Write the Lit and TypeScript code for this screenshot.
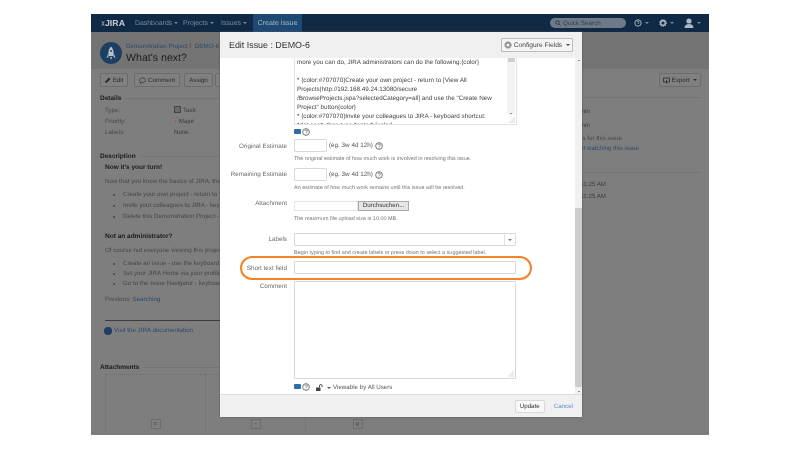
import { LitElement, html, css } from "lit";
import { customElement } from "lit/decorators.js";

const help = html`<svg class="help" viewBox="0 0 10 10" width="8" height="8"><circle cx="5" cy="5" r="4.2" fill="none" stroke="#555" stroke-width="1"/><path d="M3.6 3.9a1.5 1.5 0 1 1 2.2 1.3c-.5.3-.8.5-.8 1.1" fill="none" stroke="#555" stroke-width=".9"/><circle cx="5" cy="7.5" r=".6" fill="#555"/></svg>`;
const wiki = html`<span class="wiki"></span>`;
const caret = html`<i class="caret"></i>`;
const grip = html`<svg class="grip" width="6" height="6" viewBox="0 0 6 6"><path d="M5 1v.01M3 3v.01M5 3v.01M1 5v.01M3 5v.01M5 5v.01" stroke="#999" stroke-linecap="round"/></svg>`;

@customElement("app-root")
export class AppRoot extends LitElement {
  static styles = css`
    :host { display: block; width: 800px; height: 450px; background: #fff; font-family: "Liberation Sans", Arial, sans-serif; overflow: hidden; text-rendering: geometricPrecision; }
    .stage { box-sizing: border-box; width: 800px; height: 450px; padding: 14px 91px 15px; filter: blur(0.4px); }
    .frame { position: relative; width: 618px; height: 421px; background: #7e7e7e; overflow: hidden; color: #333; font-size: 6.2px; }
    .top { height: 18px; background: #102a45; display: flex; align-items: center; padding: 0 8px 0 10px; color: #7d8b9b; gap: 10px; font-size: 6.9px; }
    .logo { color: #c3cad2; font-weight: 700; font-size: 8.8px; width: 24px; display: flex; align-items: center; gap: 0; flex: none; }
    .nav { white-space: nowrap; flex: none; }
    .nav.a { width: 38px; } .nav.b { width: 28px; } .nav.c { width: 22px; }
    .create { background: #1c4a75; color: #a8b6c4; height: 18px; width: 49px; display: flex; align-items: center; justify-content: center; font-size: 7.1px; flex: none; }
    .spacer { flex: 1; }
    .search { width: 76px; height: 10px; border-radius: 6px; background: #6d7b89; color: #2b3b4c; font-size: 6.3px; display: flex; align-items: center; gap: 2px; padding-left: 5px; box-sizing: border-box; margin-right: -2px; }
    .ticon { display: flex; align-items: center; gap: 1px; }
    .caret { display: inline-block; width: 0; height: 0; border: 2px solid transparent; border-top-color: currentColor; border-bottom: 0; margin-left: 2px; vertical-align: middle; }
    .phead { height: 37px; background: #747474; display: flex; gap: 4px; padding: 10px 9px 0; box-sizing: border-box; }
    .pav { width: 22px; height: 22px; border-radius: 50%; background: #1d3f63; display: flex; align-items: center; justify-content: center; flex: none; }
    .phead .txt { overflow: hidden; width: 94px; }
    .crumb { color: #2e4a66; line-height: 9px; white-space: nowrap; font-size: 6.25px; }
    .crumb span { color: #444; }
    .title { font-size: 10.6px; color: #1c1c1c; line-height: 15px; white-space: nowrap; }
    .tools { display: flex; gap: 4px; padding: 4px 9px 0; height: 22px; box-sizing: border-box; }
    .tb { height: 14px; border: 1px solid #6c6c6c; background: #808080; border-radius: 2px; box-sizing: border-box; display: flex; align-items: center; justify-content: center; color: #2c2c2c; gap: 2px; flex: none; }
    .tb.e { width: 28px; margin-right: 2px; } .tb.c { width: 46px; } .tb.s { width: 29px; margin-right: -2px; } .tb.m { width: 30px; } .tb.x { width: 42px; }
    .main { display: flex; }
    .left { width: 129px; padding-left: 9px; box-sizing: border-box; white-space: nowrap; overflow: hidden; }
    .sect { font-weight: 700; font-size: 6.5px; color: #1b1b1b; height: 9px; line-height: 9px; display: flex; align-items: center; gap: 4px; }
    .sect::after { content: ""; flex: 1; height: 1px; background: #747474; min-width: 60px; }
    .sect.d { margin-top: 3px; } .sect.n { margin-top: 15px; } .sect.a { margin-top: 28px; }
    .kv { display: grid; grid-template-columns: 69px 1fr; padding: 3px 0 0 5px; row-gap: 2px; line-height: 9px; color: #3c3c3c; }
    .kv .k { color: #484848; }
    .task { display: inline-block; width: 5px; height: 5px; border: 1px solid #444; background: #6a6a6a; margin-right: 2px; vertical-align: -1px; }
    .desc { padding: 0 0 0 5px; line-height: 9px; color: #474747; }
    .desc b { display: block; color: #1b1b1b; font-size: 6.5px; }
    .desc .b1 { padding-top: 2px; } .desc .b2 { padding-top: 9px; }
    .desc p { margin: 0; padding-top: 5px; }
    .desc ul { margin: 0; padding: 4px 0 0 18px; }
    .desc li { height: 11px; line-height: 9px; }
    .desc ul.tight li { height: 10px; }
    .desc p.prev { padding-top: 6px; }
    a, .link { color: #2b4a6c; text-decoration: none; }
    .rule { height: 1px; background: #3c3c3c; margin: 16px 0 0 5px; }
    .doc { display: flex; align-items: center; gap: 2px; margin: 5px 0 0 4px; color: #2b4a6c; line-height: 9px; }
    .dot { width: 8px; height: 8px; border-radius: 50%; background: #1d3f63; }
    .atts { display: flex; position: absolute; left: 14px; top: 360px; }
    .cell { width: 100px; height: 62px; border: 1px dotted #6f6f6f; border-right: 0; box-sizing: border-box; display: flex; align-items: flex-end; justify-content: center; padding-bottom: 6px; }
    .cell.l { width: 104px; }
    .cell span { width: 10px; height: 10px; border: 1px solid #6c6c6c; text-align: center; font-size: 5px; line-height: 9px; color: #333; box-sizing: border-box; }
    .right { margin-left: auto; width: 127px; box-sizing: border-box; color: #3c3c3c; line-height: 9px; white-space: nowrap; }
    .bar { display: flex; justify-content: flex-end; margin: -18px 8px 0 0; }
    .hr { height: 1px; background: #747474; margin: 10px 8px 0 0; }
    .rw { display: flex; justify-content: flex-end; overflow: hidden; }
    .r1 { padding-right: 119px; margin-top: 9px; }
    .r2 { padding-right: 119px; margin-top: 5px; }
    .r3 { padding-right: 87px; margin-top: 4px; color: #474747; }
    .r4 { padding-right: 70px; margin-top: 1px; }
    .hr2 { margin-top: 19px; }
    .r5 { padding-right: 103px; margin-top: 7px; }
    .r6 { padding-right: 103px; margin-top: 3px; }

    .dialog { position: absolute; left: 129px; top: 18px; width: 362px; height: 385px; background: #fff; display: flex; flex-direction: column; box-shadow: 0 0 2px #555; color: #555; }
    .dh { height: 26px; background: #f0f0f0; flex: none; display: flex; align-items: center; justify-content: space-between; padding: 0 9px; box-sizing: border-box; }
    .dh h2 { margin: 0; font-weight: 400; font-size: 8.9px; color: #333; }
    .cfg { height: 14px; width: 72px; border: 1px solid #bbb; background: #f5f5f5; box-sizing: border-box; display: flex; align-items: center; justify-content: center; gap: 2px; color: #444; font-size: 6.65px; border-radius: 1px; }
    .db { flex: 1; display: flex; min-height: 0; }
    .form { flex: 1; overflow: hidden; }
    .sb { width: 7px; background: #f0f0f0; box-sizing: border-box; display: flex; flex-direction: column; justify-content: space-between; align-items: center; position: relative; }
    .thumb { position: absolute; left: 0; right: 0; top: 150px; height: 179px; background: #cdcdcd; }
    .arr { width: 0; height: 0; border: 1.5px solid transparent; position: relative; }
    .arr.u { border-bottom-color: #333; margin-top: 2px; border-top: 0; }
    .arr.d { border-top-color: #333; margin-bottom: 2px; border-bottom: 0; }
    .row { display: grid; grid-template-columns: 67px 222px; column-gap: 7px; }
    .lab { text-align: right; font-size: 6.3px; line-height: 9px; color: #6a6a6a; }
    .ta { height: 67px; margin-left: 74px; width: 223px; box-sizing: border-box; border: 1px solid #e2e2e2; border-top: 0; padding: 0 2px; position: relative; overflow: hidden; color: #444; line-height: 9px; font-size: 6.3px; }
    .ta p { margin: 0; white-space: nowrap; }
    .ta .gap { height: 9px; }
    .tasb { position: absolute; right: 1px; top: 0; bottom: 9px; width: 8px; background: #f3f3f3; display: flex; flex-direction: column; justify-content: space-between; align-items: center; }
    .tasb i { display: block; width: 7px; height: 4px; background: #cfcfcf; }
    .tasb .arr { margin-bottom: 1px; }
    .grip { position: absolute; right: 1px; bottom: 1px; }
    .icons { display: flex; align-items: center; gap: 1px; margin: 2px 0 0 74px; height: 9px; }
    .wiki { display: inline-block; width: 7px; height: 5px; background: #2e6da8; border-radius: 1px; }
    .help { flex: none; }
    .inp { border: 1px solid #d8d8d8; border-radius: 1px; box-sizing: border-box; background: #fff; }
    .small { width: 33px; height: 13px; }
    .flexf { display: flex; align-items: center; gap: 2px; color: #555; font-size: 6.3px; }
    .hint { font-size: 5.45px; line-height: 8px; color: #777; margin-top: 3px; white-space: nowrap; }
    .hint.f { margin-top: 4px; }
    .hint.c { height: 6px; margin-top: 3px; overflow: hidden; }
    .file { display: flex; align-items: center; }
    .fin { width: 64px; height: 10px; border: 1px solid #e4e4e4; box-sizing: border-box; }
    .bro { width: 51px; height: 10px; border: 1px solid #aaa; background: #e6e6e6; box-sizing: border-box; text-align: center; font-size: 6.2px; line-height: 8px; color: #333; }
    .wide { width: 222px; height: 13px; }
    .lb { display: flex; justify-content: flex-end; align-items: center; }
    .lb .d { width: 10px; height: 11px; border-left: 1px solid #e0e0e0; display: flex; align-items: center; justify-content: center; color: #777; }
    .lb .caret { margin: 0; }
    .cmt { width: 222px; height: 98px; position: relative; }
    .perm { display: flex; align-items: center; gap: 2px; margin-left: 5px; color: #555; font-size: 6.2px; padding-top: 2px; }
    .ic2 { margin-top: 3px; }
    .r-a { margin-top: 3px; } .r-b { margin-top: 5px; } .r-c { margin-top: 9px; } .r-d { margin-top: 10px; } .r-e { margin-top: 6px; } .r-f { margin-top: 7px; }
    .lt3 { padding-top: 3px; } .lt2 { padding-top: 2px; } .lt1 { padding-top: 1px; } .ltn { margin-top: -2px; }
    .df { height: 23px; flex: none; background: #f0f0f0; border-top: 1px solid #dcdcdc; box-sizing: border-box; display: flex; justify-content: flex-end; align-items: center; gap: 9px; padding: 0 9px 0 0; }
    .up { width: 30px; height: 13px; background: #f8f8f8; border: 1px solid #d8d8d8; border-radius: 2px; box-sizing: border-box; text-align: center; line-height: 11px; color: #333; font-size: 6.2px; }
    .cc { color: #5b8fc7; font-size: 6.2px; }
    .oval { position: absolute; left: 149px; top: 242px; width: 292px; height: 24px; border: 2px solid #f58426; border-radius: 12px; box-sizing: border-box; }
  `;

  render() {
    return html`<div class="stage"><div class="frame">
      <div class="top">
        <div class="logo"><svg width="5" height="9" viewBox="0 0 7 9"><path d="M3.5 0.5v8M1 1l2.5 3L6 1M1 8l2.5-3L6 8" stroke="#c3cad2" fill="none"/></svg>JIRA</div>
        <div class="nav a">Dashboards${caret}</div><div class="nav b">Projects${caret}</div><div class="nav c">Issues${caret}</div>
        <div class="create">Create issue</div>
        <div class="spacer"></div>
        <div class="search"><svg width="6" height="6" viewBox="0 0 6 6"><circle cx="2.5" cy="2.5" r="1.8" fill="none" stroke="#2b3b4c"/><path d="M4 4l1.6 1.6" stroke="#2b3b4c"/></svg>Quick Search</div>
        <div class="ticon"><svg width="8" height="8" viewBox="0 0 8 8"><circle cx="4" cy="4" r="3.2" fill="none" stroke="#a5b0bb"/><path d="M3 3.2a1 1 0 1 1 1 1v.8" stroke="#a5b0bb" fill="none" stroke-width=".8"/></svg>${caret}</div>
        <div class="ticon"><svg width="8" height="8" viewBox="0 0 8 8"><circle cx="4" cy="4" r="2.4" fill="none" stroke="#a5b0bb" stroke-width="1.6"/><circle cx="4" cy="4" r="3.5" fill="none" stroke="#a5b0bb" stroke-width="1" stroke-dasharray="1 1.2"/></svg>${caret}</div>
        <div class="ticon"><svg width="10" height="10" viewBox="0 0 10 10"><circle cx="5" cy="3" r="2.6" fill="#a9b7c6"/><path d="M0.5 10c0-3 2-4 4.5-4s4.500 1 4.500 4z" fill="#a9b7c6"/></svg>${caret}</div>
      </div>
      <div class="phead">
        <div class="pav"><svg width="10" height="14" viewBox="0 0 10 14"><path d="M5 0.500C7.500 3 8 6 7.500 10h-5C2 6 2.500 3 5 .5z" fill="#b9c4cf"/><path d="M2 8L.5 12l2-1M8 8l1.500 4-2-1M4 11l1 3 1-3" fill="#b9c4cf"/><circle cx="5" cy="5" r="1" fill="#1d3f63"/></svg></div>
        <div class="txt"><div class="crumb">Demonstration Project <span>/&nbsp;</span> DEMO-6</div><div class="title">What's next?</div></div>
      </div>
      <div class="tools">
        <div class="tb e"><svg width="6" height="6" viewBox="0 0 6 6"><path d="M0 6l.5-2L4 .5 5.500 2 2 5.500z" fill="#2c2c2c"/></svg>Edit</div>
        <div class="tb c"><svg width="7" height="7" viewBox="0 0 7 7"><path d="M3.500 1C1.800 1 .5 2 .5 3.200c0 .8.6 1.500 1.400 1.800L1.500 6.500 3.200 5.400c2 .1 3.300-1 3.300-2.200S5.200 1 3.500 1z" fill="none" stroke="#2c2c2c" stroke-width=".7"/></svg>Comment</div>
        <div class="tb s">Assign</div>
        <div class="tb m"></div>
      </div>
      <div class="main">
        <div class="left">
          <div class="sect d">Details</div>
          <div class="kv"><span class="k">Type:</span><span><i class="task"></i>Task</span><span class="k">Priority:</span><span><span style="color:#a33">↑</span> Major</span><span class="k">Labels:</span><span>None</span></div>
          <div class="sect n">Description</div>
          <div class="desc">
            <b class="b1">Now it's your turn!</b>
            <p>Now that you know the basics of JIRA, there's more you can do</p>
            <ul><li>Create your own project - return to View All Projects</li><li>Invite your colleagues to JIRA - keyboard shortcut</li><li>Delete this Demonstration Project - keyboard shortcut</li></ul>
            <b class="b2">Not an administrator?</b>
            <p>Of course not everyone viewing this project</p>
            <ul class="tight"><li>Create an issue - use the keyboard shortcut</li><li>Set your JIRA Home via your profile menu</li><li>Go to the Issue Navigator - keyboard shortcut</li></ul>
            <p class="prev">Previous: <a>Searching</a></p>
          </div>
          <div class="rule"></div>
          <div class="doc"><span class="dot"></span>Visit the JIRA documentation</div>
          <div class="sect a">Attachments</div>
        </div>
        <div class="right">
          <div class="bar"><div class="tb x"><svg width="7" height="7" viewBox="0 0 7 7"><path d="M.5 1h6v4h-6zM3.500 3v3.500" fill="none" stroke="#2c2c2c" stroke-width=".8"/></svg>Export${caret}</div></div>
          <div class="hr"></div>
          <div class="rw r1"><span>Admin</span></div>
          <div class="rw r2"><span>Admin</span></div>
          <div class="rw r3"><span>votes for this issue</span></div>
          <div class="rw r4 link"><span>Start watching this issue</span></div>
          <div class="hr hr2"></div>
          <div class="rw r5"><span>Today 11:25 AM</span></div>
          <div class="rw r6"><span>Today 11:25 AM</span></div>
        </div>
      </div>
      <div class="atts"><div class="cell"><span>c</span></div><div class="cell"><span>-</span></div><div class="cell l"><span>g</span></div></div>

      <div class="dialog">
        <div class="dh"><h2>Edit Issue : DEMO-6</h2><div class="cfg"><svg width="8" height="8" viewBox="0 0 8 8"><circle cx="4" cy="4" r="2.300" fill="none" stroke="#888" stroke-width="1.400"/><circle cx="4" cy="4" r="3.400" fill="none" stroke="#888" stroke-dasharray="1 1"/></svg>Configure Fields${caret}</div></div>
        <div class="db">
          <div class="form">
            <div class="ta">
              <p>more you can do, JIRA administrators can do the following:{color}</p>
              <div class="gap"></div>
              <p>* {color:#707070}Create your own project - return to [View All</p>
              <p>Projects|http://192.168.49.24:13080/secure</p>
              <p>/BrowseProjects.jspa?selectedCategory=all] and use the "Create New</p>
              <p>Project" button{color}</p>
              <p>* {color:#707070}Invite your colleagues to JIRA - keyboard shortcut:</p>
              <p>*dot one*, then type *enter* {color}</p>
              <div class="tasb"><i></i><span class="arr d"></span></div>
              ${grip}
            </div>
            <div class="icons">${wiki}${help}</div>
            <div class="row r-a"><div class="lab lt3">Original Estimate</div><div><div class="flexf"><div class="inp small"></div>(eg. 3w 4d 12h) ${help}</div><div class="hint">The original estimate of how much work is involved in resolving this issue.</div></div></div>
            <div class="row r-b"><div class="lab lt2">Remaining Estimate</div><div><div class="flexf"><div class="inp small"></div>(eg. 3w 4d 12h) ${help}</div><div class="hint">An estimate of how much work remains until this issue will be resolved.</div></div></div>
            <div class="row r-c"><div class="lab ltn">Attachment</div><div><div class="file"><div class="fin"></div><div class="bro">Durchsuchen...</div></div><div class="hint f">The maximum file upload size is 10.00 MB.</div></div></div>
            <div class="row r-d"><div class="lab lt2">Labels</div><div><div class="inp wide lb"><div class="d">${caret}</div></div><div class="hint c">Begin typing to find and create labels or press down to select a suggested label.</div></div></div>
            <div class="row r-e"><div class="lab lt3">Short text field</div><div class="inp wide"></div></div>
            <div class="row r-f"><div class="lab lt1">Comment</div><div class="inp cmt">${grip}</div></div>
            <div class="icons ic2">${wiki}${help}<div class="perm"><svg width="7" height="7" viewBox="0 0 7 7"><path d="M0 3.500h4.500V7H0z" fill="#444"/><path d="M3.500 3.500V1.800a1.300 1.300 0 0 1 2.600 0V3" fill="none" stroke="#444"/></svg>${caret} Viewable by All Users</div></div>
          </div>
          <div class="sb"><i class="arr u"></i><div class="thumb"></div><i class="arr d"></i></div>
        </div>
        <div class="df"><div class="up">Update</div><span class="cc">Cancel</span></div>
      </div>
      <div class="oval"></div>
    </div></div>`;
  }
}
